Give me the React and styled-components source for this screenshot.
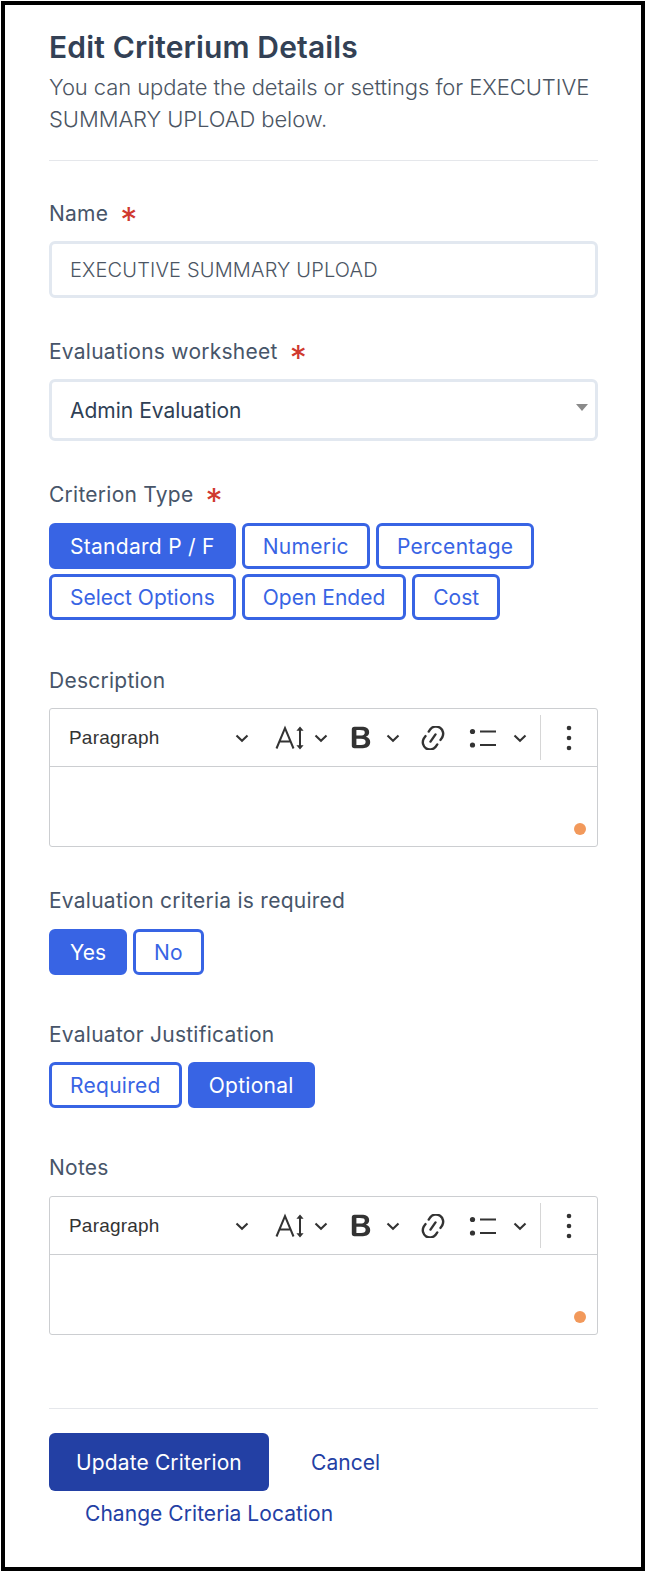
import React from "react";
import styled, { createGlobalStyle } from "styled-components";

const GlobalStyle = createGlobalStyle`
  html, body {
    margin: 0;
    padding: 0;
    background: #fff;
  }
  * {
    box-sizing: border-box;
  }
`;

const Chevron = () => (
  <ChevronIcon viewBox="0 0 14 14">
    <path d="M1.5 4.5 7 9.8l5.5-5.3" fill="none" stroke="#333" strokeWidth="2.1" />
  </ChevronIcon>
);

const FontSizeIcon = () => (
  <ToolSvg width="30" height="26" viewBox="0 0 30 26">
    <path d="M1.5 23.5 10 3 18.5 23.5M4.6 16.5h10.8" fill="none" stroke="#333" strokeWidth="2" />
    <path d="M25 4v18" stroke="#333" strokeWidth="2" />
    <path d="M21.4 5.8 25 1.6l3.6 4.2zM21.4 20.2 25 24.4l3.6-4.2z" fill="#333" />
  </ToolSvg>
);

const BoldIcon = () => (
  <ToolSvg width="20" height="23" viewBox="3.5 2.5 13 15">
    <path
      fill="#333"
      d="M10.187 17H5.773c-.637 0-1.092-.138-1.364-.415-.273-.277-.409-.718-.409-1.323V4.738c0-.617.14-1.062.419-1.332.279-.27.73-.406 1.354-.406h4.68c.69 0 1.288.041 1.793.124.506.083.96.242 1.36.478.341.197.644.447.906.75a3.262 3.262 0 0 1 .808 2.162c0 1.401-.722 2.426-2.167 3.075C15.05 10.175 16 11.315 16 13.01a3.756 3.756 0 0 1-2.296 3.504 6.1 6.1 0 0 1-1.517.377c-.571.073-1.238.11-2 .11zm-.217-6.217H7v4.087h3.069c1.977 0 2.965-.69 2.965-2.072 0-.707-.256-1.22-.768-1.537-.512-.319-1.277-.478-2.296-.478zM7 5.13v3.619h2.606c.729 0 1.292-.067 1.69-.2a1.6 1.6 0 0 0 .91-.765c.165-.267.247-.566.247-.897 0-.707-.26-1.176-.778-1.409-.519-.232-1.31-.348-2.375-.348H7z"
    />
  </ToolSvg>
);

const LinkIcon = () => (
  <ToolSvg width="24" height="24" viewBox="2.5 2.5 15 15">
    <path
      fill="#333"
      d="m11.077 15 .991-1.416a.75.75 0 1 1 1.229.86l-1.148 1.64a.748.748 0 0 1-.217.206 5.251 5.251 0 0 1-8.503-5.955.741.741 0 0 1 .12-.274l1.147-1.639a.75.75 0 1 1 1.228.86L4.933 10.7l.006.003a3.75 3.75 0 0 0 6.132 4.294l.006.004zm5.494-5.335a.748.748 0 0 1-.12.274l-1.147 1.639a.75.75 0 1 1-1.228-.86l.86-1.23a3.75 3.75 0 0 0-6.144-4.301l-.86 1.229a.75.75 0 0 1-1.229-.86l1.148-1.64a.748.748 0 0 1 .217-.206 5.251 5.251 0 0 1 8.503 5.955zm-4.563-2.532a.75.75 0 0 1 .184 1.045l-3.155 4.505a.75.75 0 1 1-1.229-.86l3.155-4.506a.75.75 0 0 1 1.045-.184z"
    />
  </ToolSvg>
);

const ListIcon = () => (
  <ToolSvg width="30" height="22" viewBox="0 0 30 22">
    <circle cx="3.5" cy="4.5" r="2.6" fill="#333" />
    <circle cx="3.5" cy="18" r="2.6" fill="#333" />
    <path d="M11 4.5h16M11 18h16" stroke="#333" strokeWidth="2.2" />
  </ToolSvg>
);

const MoreIcon = () => (
  <ToolSvg width="6" height="26" viewBox="0 0 6 26">
    <circle cx="3" cy="3" r="2.3" fill="#333" />
    <circle cx="3" cy="13" r="2.3" fill="#333" />
    <circle cx="3" cy="23" r="2.3" fill="#333" />
  </ToolSvg>
);

const RichText = ({ top }) => (
  <Editor $top={top}>
    <Toolbar>
      <HeadingDropdown>
        Paragraph
        <Chevron />
      </HeadingDropdown>
      <ToolGroup $width={53} $left={26}>
        <FontSizeIcon />
        <Chevron />
      </ToolGroup>
      <ToolGroup $width={49} $left={23}>
        <BoldIcon />
        <Chevron />
      </ToolGroup>
      <LinkButton>
        <LinkIcon />
      </LinkButton>
      <ToolGroup $width={58} $left={24}>
        <ListIcon />
        <Chevron />
      </ToolGroup>
      <ToolSeparator />
      <MoreButton>
        <MoreIcon />
      </MoreButton>
    </Toolbar>
    <EditArea>
      <StatusDot />
    </EditArea>
  </Editor>
);

export default function App() {
  return (
    <>
      <GlobalStyle />
      <Frame>
        <Title>Edit Criterium Details</Title>
        <Subtitle>
          You can update the details or settings for EXECUTIVE SUMMARY UPLOAD below.
        </Subtitle>
        <Rule />

        <Label $top={41}>
          Name <Required>*</Required>
        </Label>
        <TextInput readOnly value="EXECUTIVE SUMMARY UPLOAD" />

        <Label $top={42}>
          Evaluations worksheet <Required>*</Required>
        </Label>
        <SelectBox>
          Admin Evaluation
          <SelectArrow />
        </SelectBox>

        <Label $top={42}>
          Criterion Type <Required>*</Required>
        </Label>
        <OptionGrid>
          <OptionRow>
            <Option $active>Standard P / F</Option>
            <Option>Numeric</Option>
            <Option>Percentage</Option>
          </OptionRow>
          <OptionRow>
            <Option $tight>Select Options</Option>
            <Option $tight>Open Ended</Option>
            <Option $tight>Cost</Option>
          </OptionRow>
        </OptionGrid>

        <Label $top={49}>Description</Label>
        <RichText top={15} />

        <Label $top={42}>Evaluation criteria is required</Label>
        <OptionGrid>
          <OptionRow>
            <Option $active $tight>Yes</Option>
            <Option>No</Option>
          </OptionRow>
        </OptionGrid>

        <Label $top={48}>Evaluator Justification</Label>
        <OptionGrid $top={15}>
          <OptionRow>
            <Option>Required</Option>
            <Option $active>Optional</Option>
          </OptionRow>
        </OptionGrid>

        <Label $top={48}>Notes</Label>
        <RichText />

        <FooterRule />
        <Actions>
          <PrimaryButton>Update Criterion</PrimaryButton>
          <TextLink>Cancel</TextLink>
        </Actions>
        <LocationLink>Change Criteria Location</LocationLink>
      </Frame>
    </>
  );
}

const Frame = styled.main`
  width: 644px;
  height: 1570px;
  margin: 1px;
  border: 4px solid #000;
  padding: 25px 43px 0 44px;
  background: #fff;
  font-family: Inter, "Liberation Sans", sans-serif;
  overflow: hidden;
`;

const Title = styled.h1`
  margin: 0;
  font-size: 30px;
  line-height: 34px;
  font-weight: 600;
  letter-spacing: 0.15px;
  color: #334155;
`;

const Subtitle = styled.p`
  margin: 7px 0 0;
  font-size: 22px;
  line-height: 32px;
  font-weight: 300;
  letter-spacing: -0.08px;
  color: #4b5563;
`;

const Rule = styled.hr`
  margin: 25px 0 0;
  border: 0;
  border-top: 1px solid #e5e7eb;
`;

const Label = styled.div`
  margin-top: ${({ $top }) => $top}px;
  height: 24px;
  display: flex;
  align-items: center;
  gap: 12px;
  font-size: 21px;
  line-height: 24px;
  font-weight: 400;
  letter-spacing: 0.25px;
  color: #475569;
`;

const Required = styled.span`
  height: 24px;
  font-size: 34px;
  line-height: 36px;
  letter-spacing: 0;
  color: #d0392f;
`;

const TextInput = styled.input`
  display: block;
  width: 100%;
  height: 57px;
  margin-top: 15px;
  padding: 0 18px;
  border: 3px solid #e2e8f0;
  border-radius: 6px;
  outline: none;
  font-family: inherit;
  font-size: 20px;
  font-weight: 300;
  letter-spacing: 0.17px;
  color: #4b5563;
  background: #fff;
`;

const SelectBox = styled.div`
  position: relative;
  display: flex;
  align-items: center;
  height: 62px;
  margin-top: 15px;
  padding: 0 18px;
  border: 3px solid #e2e8f0;
  border-radius: 6px;
  font-size: 21px;
  color: #2f3f55;
`;

const SelectArrow = styled.span`
  position: absolute;
  right: 7px;
  top: 22px;
  width: 0;
  height: 0;
  border-left: 6px solid transparent;
  border-right: 6px solid transparent;
  border-top: 7px solid #8a8a8a;
`;

const OptionGrid = styled.div`
  display: flex;
  flex-direction: column;
  gap: 5px;
  margin-top: ${({ $top }) => $top || 16}px;
`;

const OptionRow = styled.div`
  display: flex;
  gap: 6px;
`;

const Option = styled.button`
  height: 46px;
  padding: 0 18px;
  border: 3px solid #3864e4;
  border-radius: 6px;
  font-family: inherit;
  font-size: 21px;
  font-weight: 400;
  letter-spacing: ${({ $tight }) => ($tight ? "0" : "0.28px")};
  color: ${({ $active }) => ($active ? "#fff" : "#3864e4")};
  background: ${({ $active }) => ($active ? "#3864e4" : "#fff")};
`;

const Editor = styled.section`
  margin-top: ${({ $top }) => $top || 16}px;
  border: 1px solid #ccced1;
  border-radius: 3px;
  height: 139px;
  display: flex;
  flex-direction: column;
`;

const Toolbar = styled.div`
  display: flex;
  align-items: center;
  height: 58px;
  flex: none;
  padding-left: 19px;
  border-bottom: 1px solid #ccced1;
`;

const HeadingDropdown = styled.div`
  display: flex;
  align-items: center;
  justify-content: space-between;
  width: 180px;
  font-family: "Liberation Sans", Arial, sans-serif;
  font-size: 19px;
  letter-spacing: 0.2px;
  color: #333;
`;

const ToolGroup = styled.div`
  display: flex;
  align-items: center;
  justify-content: space-between;
  width: ${({ $width }) => $width}px;
  margin-left: ${({ $left }) => $left}px;
`;

const ToolSvg = styled.svg`
  display: block;
  flex: none;
`;

const ChevronIcon = styled.svg`
  display: block;
  flex: none;
  width: 14px;
  height: 14px;
`;

const LinkButton = styled.div`
  margin-left: 21px;
`;

const ToolSeparator = styled.div`
  width: 1px;
  height: 45px;
  margin-left: 13px;
  background: #d6d6d6;
`;

const MoreButton = styled.div`
  margin-left: 25px;
`;

const EditArea = styled.div`
  position: relative;
  flex: 1;
`;

const StatusDot = styled.span`
  position: absolute;
  right: 11px;
  bottom: 11px;
  width: 12px;
  height: 12px;
  border-radius: 50%;
  background: #f2995b;
`;

const FooterRule = styled(Rule)`
  margin-top: 73px;
`;

const Actions = styled.div`
  display: flex;
  align-items: center;
  margin-top: 24px;
  gap: 42px;
`;

const PrimaryButton = styled.button`
  width: 220px;
  height: 58px;
  border: 0;
  border-radius: 6px;
  background: #2340a4;
  color: #fff;
  font-family: inherit;
  font-size: 21px;
  letter-spacing: 0.12px;
`;

const TextLink = styled.a`
  font-size: 21px;
  letter-spacing: 0.05px;
  color: #2340a4;
`;

const LocationLink = styled(TextLink)`
  display: block;
  margin: 11px 0 0 36px;
  line-height: 24px;
`;
